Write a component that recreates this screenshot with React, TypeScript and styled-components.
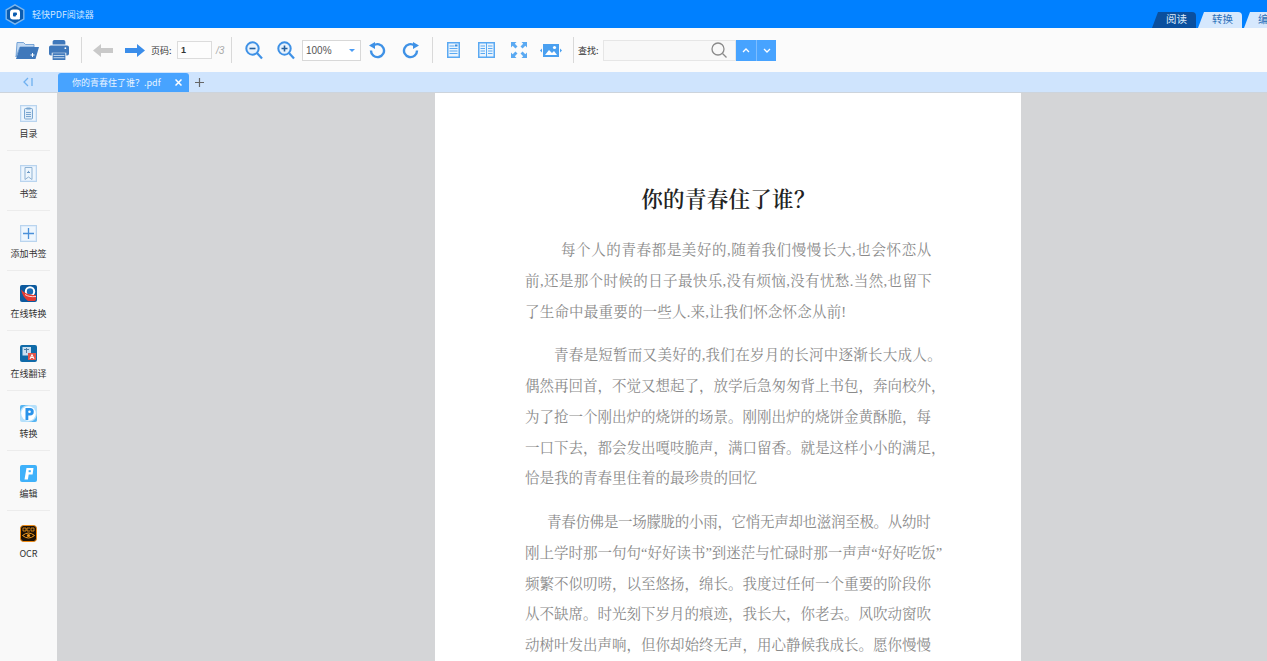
import React from "react";
import styled, { createGlobalStyle } from "styled-components";

const Global = createGlobalStyle`
  html, body { margin: 0; padding: 0; height: 100%; overflow: hidden; }
  body { font-family: "Noto Sans CJK SC", "Liberation Sans", sans-serif; }
  #root { height: 100%; }
`;

const Shell = styled.div`
  width: 1267px; height: 661px; display: flex; flex-direction: column; overflow: hidden;
  font-family: "Noto Sans CJK SC", sans-serif;
`;
const TitleBar = styled.header`
  height: 28px; background: #0080ff; display: flex; align-items: center; flex: none;
`;
const Logo = styled.div`
  width: 20px; height: 21px; margin: 0 0 0 5px; flex: none; display: flex;
`;
const AppName = styled.span`
  margin-left: 7px; font-size: 9px; color: #cfe6ff; white-space: nowrap;
`;
const ModeTabs = styled.nav`
  margin-left: auto; align-self: flex-end; display: flex; gap: 2px; height: 16px; margin-right: -21px;
`;
const ModeTab = styled.div<{ $active?: boolean }>`
  width: 44px; height: 16px; display: flex; align-items: center; justify-content: center;
  font-size: 10.5px; line-height: 14px; padding: 0 0 2px 5px; box-sizing: border-box; white-space: nowrap;
  color: ${(p) => (p.$active ? "#dcebfb" : "#2a6fb8")};
  background: ${(p) => (p.$active ? "#0a4f9e" : "#d6e8fd")};
  clip-path: polygon(6px 0, 100% 0, 100% 100%, 0 100%);
  border-radius: 4px 4px 0 0;
`;
const Toolbar = styled.div`
  height: 44px; background: #fbfbfb; display: flex; align-items: center; flex: none;
`;
const ToolButton = styled.div<{ $w: number; $ml?: number }>`
  width: ${(p) => p.$w}px; margin-left: ${(p) => p.$ml ?? 0}px; height: 28px; flex: none;
  display: flex; align-items: center; justify-content: center;
`;
const Divider = styled.div<{ $ml: number }>`
  width: 1px; height: 26px; background: #d9d9d9; margin-left: ${(p) => p.$ml}px; flex: none;
`;
const Label = styled.span<{ $ml?: number }>`
  font-size: 9px; color: #333; margin-left: ${(p) => p.$ml ?? 0}px; flex: none; white-space: nowrap; width: 20px;
`;
const PageInput = styled.div`
  width: 30px; height: 16px; border: 1px solid #dcdcdc; background: #fdfdfd; margin-left: 6px;
  font-size: 9px; line-height: 16px; padding-left: 3px; color: #333; flex: none;
  font-family: "Liberation Sans", sans-serif; font-weight: 700;
`;
const PageTotal = styled.span`
  font-size: 10px; color: #aaa; margin-left: 4px; width: 8px; font-family: "Liberation Sans", sans-serif; font-style: italic; flex: none;
`;
const ZoomSelect = styled.div`
  width: 49px; height: 19px; border: 1px solid #d8d8d8; background: #fff; margin-left: 7px; flex: none;
  display: flex; align-items: center; justify-content: space-between; padding: 0 5px 0 3px;
  font-size: 10px; color: #555; font-family: "Liberation Sans", sans-serif;
`;
const Caret = styled.i`
  width: 0; height: 0; border-left: 3px solid transparent; border-right: 3px solid transparent;
  border-top: 3px solid #4a9cf5; display: block;
`;
const SearchBox = styled.div`
  width: 123px; height: 19px; border: 1px solid #e6e6e6; background: #f8f8f8; margin-left: 5px; flex: none;
  display: flex; align-items: center; justify-content: flex-end; padding-right: 8px;
`;
const StepButton = styled.div`
  width: 20px; height: 21px; box-sizing: border-box; background: #47a3ff; flex: none; display: flex;
  align-items: center; justify-content: center; & + & { border-left: 1px solid #7dbdff; }
`;
const TabBar = styled.div`
  height: 20px; background: #cfe4fd; display: flex; align-items: stretch; flex: none;
  border-bottom: 1px solid #cdd4dc;
`;
const Collapse = styled.div`
  width: 57px; flex: none; display: flex; align-items: center; justify-content: center; padding-right: 1px; box-sizing: border-box;
`;
const DocTab = styled.div`
  width: 131px; margin: 1px 0 0 1px; background: #47a3ff; border-radius: 3px 3px 0 0; color: #e8f3ff; font-size: 9px;
  display: flex; align-items: center; justify-content: space-between; padding: 0 7px 0 14px; box-sizing: border-box; flex: none;
`;
const AddTab = styled.div`
  margin-left: 6px; display: flex; align-items: center;
`;
const Body = styled.div`
  flex: 1; display: flex; min-height: 0; background: #d4d5d7;
`;
const Sidebar = styled.aside`
  width: 57px; flex: none; background: #f9f9f9; display: flex; flex-direction: column; align-items: center; box-sizing: border-box;
`;
const SideItem = styled.div`
  width: 43px; height: 60px; box-sizing: border-box; display: flex; flex-direction: column; align-items: center;
  border-bottom: 1px solid #ececec; flex: none; padding-top: 14px;
  &:first-child { height: 58px; padding-top: 12px; }
  &:last-child { border-bottom: 0; }
`;
const SideIcon = styled.div`
  width: 17px; height: 17px; display: flex; flex: none;
`;
const SideText = styled.span`
  font-size: 9px; line-height: 13px; margin-top: 5px; color: #333; white-space: nowrap;
`;
const Viewer = styled.main`
  flex: 1; display: flex; justify-content: flex-start; padding-left: 378px; overflow: hidden; min-width: 0;
`;
const Page = styled.article`
  width: 586px; background: #fff; flex: none; padding: 90px 0 0 90px; box-sizing: border-box; height: 700px;
  font-family: "Liberation Serif", "Noto Serif CJK SC", "Noto Sans CJK SC", serif;
`;
const DocTitle = styled.h1`
  margin: 0 0 22px; width: 407px; text-align: center; font-size: 21.5px; letter-spacing: 0.3px; line-height: 30px; font-weight: 600; color: #222;
  font-family: "Noto Serif CJK SC", "Noto Sans CJK SC", serif;
`;
const Para = styled.section`
  margin: 0 0 13px;
`;
const Line = styled.div<{ $indent?: number; $ls?: number }>`
  font-size: 14.5px; line-height: 30.75px; height: 30.75px; color: #8a8a8a; white-space: nowrap;
  margin-left: ${(p) => p.$indent ?? 0}px;
  letter-spacing: ${(p) => p.$ls ?? 0}px;
`;

const IconTile = ({ children }: { children: React.ReactNode }) => (
  <svg width="17" height="17" viewBox="0 0 17 17">
    <rect x=".5" y=".5" width="16" height="16" fill="#cfe3f8" stroke="#b9d4ee" />
    <rect x="1.500" y="1.500" width="14" height="14" fill="#eef6fd" />
    {children}
  </svg>
);

const sideItems: { label: string; icon: React.ReactNode }[] = [
  {
    label: "目录",
    icon: (
      <IconTile>
        <rect x="4.500" y="3.500" width="8" height="10.500" rx="1" fill="#dfecf8" stroke="#7ba6d0" />
        <rect x="6.500" y="2.500" width="4" height="2" fill="#7ba6d0" />
        <path d="M6 7.500h5M6 9.500h5M6 11.500h5" stroke="#7ba6d0" />
      </IconTile>
    ),
  },
  {
    label: "书签",
    icon: (
      <IconTile>
        <path d="M5 2.500h7v12l-3.500-2.500L5 14.500z" fill="none" stroke="#8fb2d3" />
        <path d="M8.500 5.500l.8 1.800h-1.600z" fill="#6b98c4" />
        <path d="M7 7.500h3" stroke="#6b98c4" />
      </IconTile>
    ),
  },
  {
    label: "添加书签",
    icon: (
      <IconTile>
        <path d="M8.500 3v11M3 8.500h11" stroke="#4a90d9" strokeWidth="1.300" />
      </IconTile>
    ),
  },
  {
    label: "在线转换",
    icon: (
      <svg width="17" height="17" viewBox="0 0 17 17">
        <rect width="17" height="17" rx="2" fill="#0c5a9e" />
        <circle cx="10" cy="6.500" r="4.200" fill="#1a6db5" stroke="#fff" strokeWidth="2" />
        <path d="M1 4.500c2.500 3 7 5.500 15 5.500v4.500c-.5 1-1 1.500-2 1.500H8C4.500 13.500 2 9.500 1 4.500z" fill="#e23b32" />
        <path d="M5 9.500c3 2 6 2.500 11 2" stroke="#fff" strokeWidth=".8" fill="none" />
      </svg>
    ),
  },
  {
    label: "在线翻译",
    icon: (
      <svg width="17" height="17" viewBox="0 0 17 17">
        <rect width="17" height="17" rx="2" fill="#0f6aa8" />
        <rect x="2.500" y="2" width="8.500" height="8.500" fill="#c9dff0" />
        <rect x="8" y="8" width="8" height="7" fill="#e2574c" />
        <path d="M10 14l2-4.500 2 4.500M10.800 12.500h2.500" stroke="#fff" fill="none" />
        <path d="M4 4.500h5M6.500 3v5" stroke="#4d7fa8" />
      </svg>
    ),
  },
  {
    label: "转换",
    icon: (
      <svg width="17" height="17" viewBox="0 0 17 17">
        <rect width="17" height="17" rx="2" fill="#b5e0fb" />
        <path d="M0 9C0 3 4 0 9 0H2a2 2 0 0 0-2 2zM17 8c0 6-4 9-9 9h7a2 2 0 0 0 2-2z" fill="#55b4f2" />
        <circle cx="8.500" cy="8.500" r="7.300" fill="#fff" />
        <path d="M5.500 15V3h4.500a3.500 3.500 0 0 1 0 7.500H8.300V15z" fill="#2b93ea" />
        <circle cx="9.500" cy="6.800" r="1.300" fill="#fff" />
      </svg>
    ),
  },
  {
    label: "编辑",
    icon: (
      <svg width="17" height="17" viewBox="0 0 17 17">
        <rect width="17" height="17" rx="2" fill="#3fb1fa" />
        <path d="M4.500 14.500L6.500 3H13.500l-.9 6.500H8.700l-.8 5z" fill="#fff" />
        <rect x="8.600" y="5.200" width="2.200" height="2" fill="#3fb1fa" />
      </svg>
    ),
  },
  {
    label: "OCR",
    icon: (
      <svg width="17" height="17" viewBox="0 0 17 17">
        <rect x=".5" y=".5" width="16" height="16" rx="3" fill="#1d1208" stroke="#f08a12" />
        <path d="M2.500 10.500Q8.500 5.500 14.500 10.500Q8.500 15.500 2.500 10.500z" fill="none" stroke="#f39a1d" />
        <circle cx="8.500" cy="10.500" r="1.600" fill="#f39a1d" />
        <path d="M3 3h3v3H3zM10 3H7v3h3M11 3h3v3h-3z" fill="none" stroke="#f39a1d" strokeWidth=".8" />
      </svg>
    ),
  },
];

const paragraphs: { t: string; i?: number; ls?: number }[][] = [
  [
    { t: "每个人的青春都是美好的,随着我们慢慢长大,也会怀恋从", i: 36, ls: 0.6 },
    { t: "前,还是那个时候的日子最快乐,没有烦恼,没有忧愁.当然,也留下", ls: 0.39 },
    { t: "了生命中最重要的一些人.来,让我们怀念怀念从前!", ls: 0.2 },
  ],
  [
    { t: "青春是短暂而又美好的,我们在岁月的长河中逐渐长大成人。", i: 29, ls: 0.27 },
    { t: "偶然再回首，不觉又想起了，放学后急匆匆背上书包，奔向校外，" },
    { t: "为了抢一个刚出炉的烧饼的场景。刚刚出炉的烧饼金黄酥脆，每" },
    { t: "一口下去，都会发出嘎吱脆声，满口留香。就是这样小小的满足，" },
    { t: "恰是我的青春里住着的最珍贵的回忆" },
  ],
  [
    { t: "青春仿佛是一场朦胧的小雨，它悄无声却也滋润至极。从幼时", i: 22, ls: -0.3 },
    { t: "刚上学时那一句句“好好读书”到迷茫与忙碌时那一声声“好好吃饭”" },
    { t: "频繁不似叨唠，以至悠扬，绵长。我度过任何一个重要的阶段你" },
    { t: "从不缺席。时光刻下岁月的痕迹，我长大，你老去。风吹动窗吹" },
    { t: "动树叶发出声响，但你却始终无声，用心静候我成长。愿你慢慢" },
  ],
];

export default function App() {
  return (
    <Shell>
      <Global />
      <TitleBar>
        <Logo>
          <svg width="20" height="21" viewBox="0 0 20 21">
            <path d="M10 .8l8.800 5v9.400l-8.800 5-8.800-5V5.800z" fill="#0a5cb0" stroke="#7db6ec" strokeWidth="1.400" />
            <rect x="5" y="5.500" width="10" height="10" rx="3" fill="#fff" />
            <rect x="8" y="8.500" width="4" height="4" rx="1" fill="#0a5cb0" />
            <path d="M11 11.500l3.500 3.500" stroke="#fff" strokeWidth="1.800" />
          </svg>
        </Logo>
        <AppName>轻快PDF阅读器</AppName>
        <ModeTabs>
          <ModeTab $active>阅读</ModeTab>
          <ModeTab>转换</ModeTab>
          <ModeTab>编辑</ModeTab>
        </ModeTabs>
      </TitleBar>

      <Toolbar>
        <ToolButton $w={25} $ml={14}>
          <svg width="24" height="19" viewBox="0 0 24 19">
            <path d="M2 1.500h6.500l2 2H19V6H5L1 16z" fill="#c4daf2" stroke="#5d93cf" strokeWidth=".8" />
            <path d="M5 6h19l-3.500 12H1z" fill="#3f78bb" />
            <path d="M15.500 14h4M17.500 12v4" stroke="#fff" />
          </svg>
        </ToolButton>
        <ToolButton $w={20} $ml={10}>
          <svg width="20" height="22" viewBox="0 0 22 24">
            <path d="M4 3a2 2 0 0 1 2-2h10a2 2 0 0 1 2 2v3H4z" fill="#3f78bb" />
            <path d="M2 7h18a2 2 0 0 1 2 2v7a2 2 0 0 1-2 2h-1v-3H3v3H2a2 2 0 0 1-2-2V9a2 2 0 0 1 2-2z" fill="#3f78bb" />
            <circle cx="18" cy="10" r="1" fill="#fff" />
            <path d="M4 15.500h14V23H4z" fill="#3f78bb" />
            <path d="M5 18h12M5 20.500h12" stroke="#cfe0f2" />
          </svg>
        </ToolButton>
        <Divider $ml={12} />
        <ToolButton $w={20} $ml={11}>
          <svg width="20" height="13" viewBox="0 0 20 13"><path d="M0 6.500L8 0v4h12v5H8v4z" fill="#c9c9c9" /></svg>
        </ToolButton>
        <ToolButton $w={20} $ml={12}>
          <svg width="20" height="13" viewBox="0 0 20 13"><path d="M20 6.500L12 0v4H0v5h12v4z" fill="#3a8dea" /></svg>
        </ToolButton>
        <Label $ml={6}>页码:</Label>
        <PageInput>1</PageInput>
        <PageTotal>/3</PageTotal>
        <Divider $ml={7} />
        <ToolButton $w={18} $ml={13}>
          <svg width="18" height="19" viewBox="0 0 18 19">
            <circle cx="7.500" cy="7.500" r="6.200" fill="#e9f3fd" stroke="#3e91e6" strokeWidth="2" />
            <path d="M12 12l5 5.500" stroke="#3e91e6" strokeWidth="2.200" />
            <path d="M4.500 7.500h6" stroke="#245f9d" strokeWidth="1.600" />
          </svg>
        </ToolButton>
        <ToolButton $w={18} $ml={14}>
          <svg width="18" height="19" viewBox="0 0 18 19">
            <circle cx="7.500" cy="7.500" r="6.200" fill="#e9f3fd" stroke="#3e91e6" strokeWidth="2" />
            <path d="M12 12l5 5.500" stroke="#3e91e6" strokeWidth="2.200" />
            <path d="M4.500 7.500h6M7.500 4.500v6" stroke="#245f9d" strokeWidth="1.600" />
          </svg>
        </ToolButton>
        <ZoomSelect>
          100%
          <Caret />
        </ZoomSelect>
        <ToolButton $w={17} $ml={8}>
          <svg width="17" height="17" viewBox="0 0 17 17">
            <path d="M4.500 3.500A6.500 6.500 0 1 1 2 8.500" fill="none" stroke="#3e91e6" strokeWidth="2.400" />
            <path d="M0 3.500L6 0v7z" fill="#3e91e6" />
          </svg>
        </ToolButton>
        <ToolButton $w={17} $ml={16}>
          <svg width="17" height="17" viewBox="0 0 17 17">
            <path d="M12.500 3.500A6.500 6.500 0 1 0 15 8.500" fill="none" stroke="#3e91e6" strokeWidth="2.400" />
            <path d="M17 3.500L11 0v7z" fill="#3e91e6" />
          </svg>
        </ToolButton>
        <Divider $ml={13} />
        <ToolButton $w={13} $ml={14}>
          <svg width="13" height="16" viewBox="0 0 13 16">
            <rect width="13" height="16" fill="#5aa9f2" />
            <rect x="1.500" y="1.500" width="10" height="13" fill="#eaf4fd" />
            <path d="M2.500 4h5M2.500 6.500h8M2.500 9h8M2.500 11.500h8" stroke="#5aa9f2" />
            <rect x="8" y="2.500" width="2.500" height="2" fill="#3f8fe0" />
          </svg>
        </ToolButton>
        <ToolButton $w={17} $ml={18}>
          <svg width="17" height="16" viewBox="0 0 17 16">
            <rect width="17" height="16" fill="#5aa9f2" />
            <rect x="1.500" y="1.500" width="6.500" height="13" fill="#eaf4fd" />
            <rect x="9" y="1.500" width="6.500" height="13" fill="#eaf4fd" />
            <path d="M2.500 4h4.500M2.500 6.500h4.500M2.500 9h4.500M2.500 11.500h4.500M10 4h4.500M10 6.500h4.500M10 9h4.500M10 11.500h4.500" stroke="#5aa9f2" />
          </svg>
        </ToolButton>
        <ToolButton $w={16} $ml={16}>
          <svg width="16" height="16" viewBox="0 0 16 16">
            <path d="M0 0h5.500L3.800 1.700l2.700 2.700-2.100 2.100-2.700-2.700L0 5.500zM16 0v5.500l-1.700-1.700-2.700 2.700-2.100-2.100 2.700-2.700L10.500 0zM0 16v-5.500l1.700 1.700 2.700-2.700 2.100 2.100-2.700 2.700L5.500 16zM16 16h-5.500l1.700-1.700-2.700-2.700 2.100-2.100 2.700 2.700 1.700-1.700z" fill="#5aa9f2" />
          </svg>
        </ToolButton>
        <ToolButton $w={22} $ml={13}>
          <svg width="22" height="15" viewBox="0 0 22 15">
            <rect x="3" y="1" width="16" height="13" fill="#4aa0f0" />
            <path d="M5 12l4-5 3 3 2-2 3 4z" fill="#fff" />
            <circle cx="14.500" cy="4.500" r="1.600" fill="#fff" />
            <path d="M0 7.500l2-2v4zM22 7.500l-2-2v4z" fill="#4aa0f0" />
          </svg>
        </ToolButton>
        <Divider $ml={11} />
        <Label $ml={4}>查找:</Label>
        <SearchBox>
          <svg width="16" height="17" viewBox="0 0 16 17" fill="none" stroke="#8a8a8a" strokeWidth="1.300">
            <circle cx="7" cy="7" r="6" />
            <path d="M11.500 11.500l4 4" />
          </svg>
        </SearchBox>
        <StepButton>
          <svg width="8" height="5" viewBox="0 0 8 5" fill="none" stroke="#fff" strokeWidth="1.300"><path d="M1 4l3-3 3 3" /></svg>
        </StepButton>
        <StepButton>
          <svg width="8" height="5" viewBox="0 0 8 5" fill="none" stroke="#fff" strokeWidth="1.300"><path d="M1 1l3 3 3-3" /></svg>
        </StepButton>
      </Toolbar>

      <TabBar>
        <Collapse>
          <svg width="11" height="10" viewBox="0 0 11 10" fill="none" stroke="#6fb0f0" strokeWidth="1.300">
            <path d="M5 1L1 5l4 4M9 1v8" />
          </svg>
        </Collapse>
        <DocTab>
          你的青春住了谁？.pdf
          <svg width="7" height="7" viewBox="0 0 7 7" stroke="#fff" strokeWidth="1.500"><path d="M.5.5l6 6M6.500.5l-6 6" /></svg>
        </DocTab>
        <AddTab>
          <svg width="9" height="9" viewBox="0 0 9 9" stroke="#666" strokeWidth="1.200"><path d="M4.500 0v9M0 4.500h9" /></svg>
        </AddTab>
      </TabBar>

      <Body>
        <Sidebar>
          {sideItems.map((it) => (
            <SideItem key={it.label}>
              <SideIcon>{it.icon}</SideIcon>
              <SideText>{it.label}</SideText>
            </SideItem>
          ))}
        </Sidebar>
        <Viewer>
          <Page>
            <DocTitle>你的青春住了谁？</DocTitle>
            {paragraphs.map((lines, n) => (
              <Para key={n}>
                {lines.map((l) => (
                  <Line key={l.t} $indent={l.i} $ls={l.ls}>{l.t}</Line>
                ))}
              </Para>
            ))}
          </Page>
        </Viewer>
      </Body>
    </Shell>
  );
}
